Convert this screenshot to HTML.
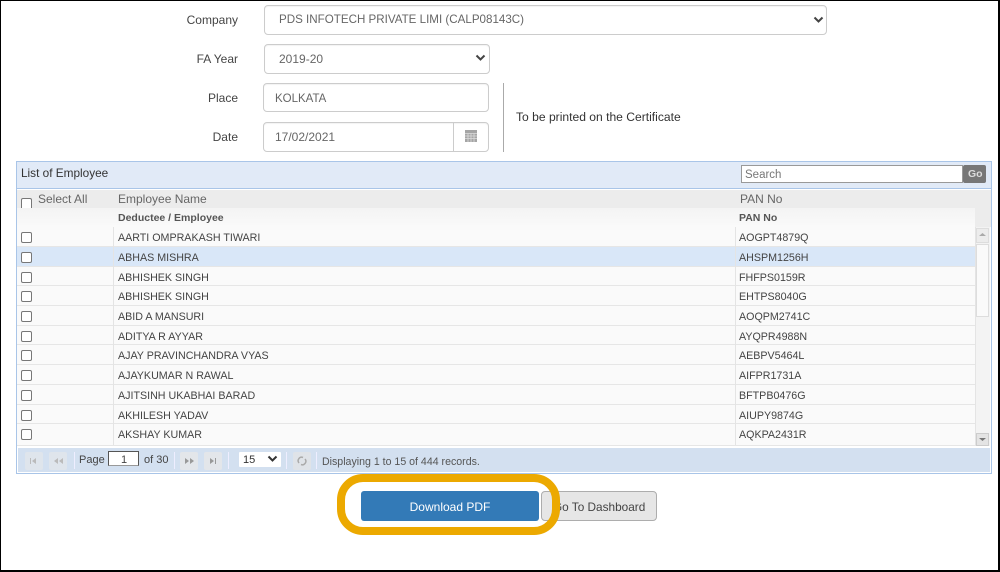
<!DOCTYPE html>
<html><head><meta charset="utf-8"><style>
html,body{margin:0;padding:0;background:#fff}
body{width:1000px;height:572px;position:relative;overflow:hidden;font-family:"Liberation Sans",sans-serif;color:#444}
#w{left:0;top:0;width:1000px;height:572px;filter:blur(.3px)}
div,span,svg{position:absolute;box-sizing:border-box}
.t{white-space:nowrap;line-height:14px}
.l{font-size:12px;color:#444;text-align:right;width:100px;left:138px}
.inp{background:#fff;border:1px solid #ccc;border-radius:4px;box-shadow:inset 0 1px 1px rgba(0,0,0,.05)}
.v{font-size:12px;color:#666}
.row{left:17px;width:958px;height:20px;border-bottom:1px solid #e6e6e6;background:#fafafa}
.row .c{left:4px;top:5px;width:11px;height:11px;border:1px solid #777;border-radius:2px;background:#fff}
.row .n{left:101px;top:3.500px;font-size:10.700px;color:#444}
.row .p{left:722px;top:3.500px;font-size:10.700px;color:#444}
.row .s1{left:96px;top:0;width:1px;height:21px;background:#e4e4e4}
.row .s2{left:718px;top:0;width:1px;height:21px;background:#e4e4e4}
.pb{top:452px;width:18px;height:18px;background:#dfe5ec;border-radius:2px}
.sep{top:452px;width:1px;height:17px;background:#b9c4d2;border-right:1px solid #eef}
</style></head><body><div id="w">
<div style="left:0;top:0;width:1000px;height:572px;border:solid #000;border-width:1px 2px 2px 1px"></div>

<div class="t l" style="top:13px">Company</div>
<div class="inp" style="left:264px;top:5px;width:563px;height:30px"></div>
<div class="t v" style="left:279px;top:13px;font-size:11.600px">PDS INFOTECH PRIVATE LIMI (CALP08143C)</div>
<svg style="left:813px;top:16px" width="11" height="8" viewBox="0 0 11 8"><path d="M1.500 1.500L5.500 5.500L9.500 1.500" fill="none" stroke="#444" stroke-width="2"/></svg>

<div class="t l" style="top:52px">FA Year</div>
<div class="inp" style="left:264px;top:44px;width:226px;height:30px"></div>
<div class="t v" style="left:279px;top:52px">2019-20</div>
<svg style="left:475px;top:54px" width="11" height="8" viewBox="0 0 11 8"><path d="M1.500 1.500L5.500 5.500L9.500 1.500" fill="none" stroke="#444" stroke-width="2"/></svg>

<div class="t l" style="top:91px">Place</div>
<div class="inp" style="left:263px;top:83px;width:226px;height:29px"></div>
<div class="t v" style="left:275px;top:92px;font-size:11.500px">KOLKATA</div>

<div class="t l" style="top:130px">Date</div>
<div class="inp" style="left:263px;top:122px;width:226px;height:30px"></div>
<div style="left:453px;top:123px;width:1px;height:28px;background:#ccc"></div>
<div class="t v" style="left:275px;top:130px">17/02/2021</div>
<svg style="left:464px;top:129px" width="14" height="14" viewBox="0 0 14 14"><rect x="1" y="1" width="12" height="12" fill="#a5a5a5"/><path d="M1 4.500H13M1 7H13M1 9.500H13M4 4.500V13M7 4.500V13M10 4.500V13" stroke="#ddd" stroke-width=".8"/></svg>

<div style="left:503px;top:83px;width:1px;height:69px;background:#aaa"></div>
<div class="t" style="left:516px;top:110px;font-size:12.100px;color:#333">To be printed on the Certificate</div>

<!-- grid -->
<div style="left:16px;top:161px;width:976px;height:313px;border:1px solid #a9c5e8;background:#fff"></div>
<div style="left:17px;top:162px;width:974px;height:27px;background:#e1eaf7;border-bottom:1px solid #a9c5e8"></div>
<div class="t" style="left:21px;top:166px;font-size:11.800px;color:#333">List of Employee</div>
<div style="left:741px;top:165px;width:222px;height:18px;background:#fff;border:1px solid #999"></div>
<div class="t" style="left:745px;top:168px;font-size:11.500px;color:#777">Search</div>
<div style="left:963px;top:165px;width:23px;height:18px;background:#777;border-radius:2px"></div>
<div class="t" style="left:968px;top:167px;font-size:10.500px;font-weight:bold;color:#ddd">Go</div>

<div style="left:17px;top:190px;width:974px;height:18px;background:#ececec"></div>
<div style="left:21px;top:198px;width:11px;height:10px;border:1px solid #777;border-bottom:0;border-radius:2px 2px 0 0;background:#fff"></div>
<div class="t" style="left:38px;top:192px;font-size:12px;color:#666">Select All</div>
<div class="t" style="left:118px;top:192px;font-size:12px;color:#666">Employee Name</div>
<div class="t" style="left:740px;top:192px;font-size:12px;color:#666">PAN No</div>

<div style="left:17px;top:208px;width:958px;height:19px;background:linear-gradient(#f4f4f4,#fafafa)"></div>
<div style="left:975px;top:208px;width:16px;height:19px;background:#ececec"></div>
<div class="t" style="left:118px;top:210.500px;font-size:10.500px;font-weight:bold;color:#555">Deductee / Employee</div>
<div class="t" style="left:739px;top:210.500px;font-size:10.500px;font-weight:bold;color:#555">PAN No</div>

<div class="row" style="top:227px;height:20px"><div class="c"></div><div class="s1"></div><div class="s2"></div><div class="t n">AARTI OMPRAKASH TIWARI</div><div class="t p">AOGPT4879Q</div></div>
<div class="row" style="top:247px;height:20px;background:#d9e7f8"><div class="c"></div><div class="s1"></div><div class="s2"></div><div class="t n">ABHAS MISHRA</div><div class="t p">AHSPM1256H</div></div>
<div class="row" style="top:267px;height:19px"><div class="c"></div><div class="s1"></div><div class="s2"></div><div class="t n">ABHISHEK SINGH</div><div class="t p">FHFPS0159R</div></div>
<div class="row" style="top:286px;height:20px"><div class="c"></div><div class="s1"></div><div class="s2"></div><div class="t n">ABHISHEK SINGH</div><div class="t p">EHTPS8040G</div></div>
<div class="row" style="top:306px;height:20px"><div class="c"></div><div class="s1"></div><div class="s2"></div><div class="t n">ABID A MANSURI</div><div class="t p">AOQPM2741C</div></div>
<div class="row" style="top:326px;height:19px"><div class="c"></div><div class="s1"></div><div class="s2"></div><div class="t n">ADITYA R AYYAR</div><div class="t p">AYQPR4988N</div></div>
<div class="row" style="top:345px;height:20px"><div class="c"></div><div class="s1"></div><div class="s2"></div><div class="t n">AJAY PRAVINCHANDRA VYAS</div><div class="t p">AEBPV5464L</div></div>
<div class="row" style="top:365px;height:20px"><div class="c"></div><div class="s1"></div><div class="s2"></div><div class="t n">AJAYKUMAR N RAWAL</div><div class="t p">AIFPR1731A</div></div>
<div class="row" style="top:385px;height:20px"><div class="c"></div><div class="s1"></div><div class="s2"></div><div class="t n">AJITSINH UKABHAI BARAD</div><div class="t p">BFTPB0476G</div></div>
<div class="row" style="top:405px;height:19px"><div class="c"></div><div class="s1"></div><div class="s2"></div><div class="t n">AKHILESH YADAV</div><div class="t p">AIUPY9874G</div></div>
<div class="row" style="top:424px;height:22px"><div class="c"></div><div class="s1"></div><div class="s2"></div><div class="t n">AKSHAY KUMAR</div><div class="t p">AQKPA2431R</div></div>

<!-- scrollbar -->
<div style="left:975px;top:227px;width:15px;height:219px;background:#f3f3f3;border-left:1px solid #e4e4e4"></div>
<div style="left:976px;top:228px;width:13px;height:15px;background:#ececec;border:1px solid #ddd"></div>
<svg style="left:979px;top:232px" width="7" height="5" viewBox="0 0 7 5"><path d="M0 4H7L3.500 1Z" fill="#aaa"/></svg>
<div style="left:976px;top:244px;width:13px;height:73px;background:#fafafa;border:1px solid #ddd"></div>
<div style="left:976px;top:433px;width:13px;height:13px;background:#e4e4e4;border:1px solid #ccc"></div>
<svg style="left:979px;top:437px" width="7" height="5" viewBox="0 0 7 5"><path d="M0 1H7L3.500 4Z" fill="#777"/></svg>

<!-- pager -->
<div style="left:18px;top:448px;width:972px;height:24px;background:#d3e0f0"></div>
<div class="pb" style="left:25px"></div>
<div class="pb" style="left:49px"></div>
<svg style="left:30px;top:458px" width="40" height="6" viewBox="0 0 40 6" fill="#bbb"><path d="M0 0H1V6H0ZM6 0V6L2 3ZM24 3L28 0V6ZM29 3L33 0V6Z"/></svg>
<div class="sep" style="left:74px"></div>
<div class="t" style="left:79px;top:452.500px;font-size:11px;color:#444">Page</div>
<div style="left:108px;top:451px;width:31px;height:15px;background:#fff;border:1px solid #555;border-bottom-color:#999"></div>
<div class="t" style="left:121px;top:452.500px;font-size:11px;color:#444">1</div>
<div class="t" style="left:144px;top:452.500px;font-size:11px;color:#444">of 30</div>
<div class="sep" style="left:174px"></div>
<div class="pb" style="left:180px;background:#e3e6ea"></div>
<div class="pb" style="left:204px;background:#e3e6ea"></div>
<svg style="left:185px;top:458px" width="40" height="6" viewBox="0 0 40 6" fill="#999"><path d="M0 0L4 3L0 6ZM5 0L9 3L5 6ZM25 0L29 3L25 6ZM30 0H31V6H30Z"/></svg>
<div class="sep" style="left:228px"></div>
<div style="left:239px;top:452px;width:42px;height:15px;background:#fff;border-radius:1px"></div>
<div class="t" style="left:243px;top:453px;font-size:11px;color:#333">15</div>
<svg style="left:267px;top:455px" width="11" height="8" viewBox="0 0 11 8"><path d="M1.500 1.500L5.500 5.500L9.500 1.500" fill="none" stroke="#333" stroke-width="2"/></svg>
<div class="sep" style="left:286px"></div>
<div class="pb" style="left:293px;background:#dfe3e8"></div>
<svg style="left:297px;top:456px" width="10" height="10" viewBox="0 0 10 10"><path d="M2 7A3.500 3.500 0 0 1 6 1.500M8 3A3.500 3.500 0 0 1 4 8.500" fill="none" stroke="#aaa" stroke-width="1.500"/></svg>
<div class="sep" style="left:316px"></div>
<div class="t" style="left:322px;top:455px;font-size:10.600px;color:#555">Displaying 1 to 15 of 444 records.</div>

<!-- buttons -->
<div style="left:541px;top:491px;width:116px;height:30px;background:#e6e6e6;border:1px solid #adadad;border-radius:4px"></div>
<div class="t" style="left:553px;top:500px;font-size:11.800px;color:#444">Go To Dashboard</div>
<div style="left:337px;top:474px;width:223px;height:61px;border:8px solid #eca900;border-radius:26px;background:transparent"></div>
<div style="left:361px;top:491px;width:178px;height:30px;background:#337ab7;border-radius:3px"></div>
<div class="t" style="left:361px;width:178px;top:500px;font-size:12px;color:#fff;text-align:center">Download PDF</div>
</div></body></html>
